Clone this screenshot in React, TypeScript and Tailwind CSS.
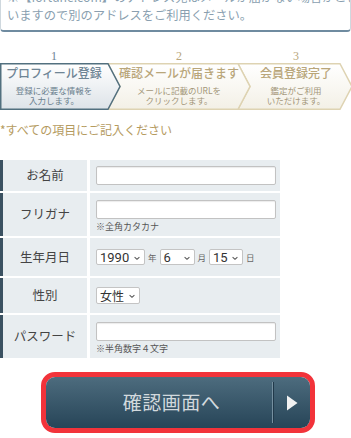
import React from 'react';

const jp = { fontFamily: '"Noto Sans CJK JP", "Noto Sans", sans-serif' };

const Chevron: React.FC<{ className?: string }> = ({ className }) => (
  <svg viewBox="0 0 10 10" className={className} fill="none" stroke="currentColor" strokeWidth="1.3">
    <path d="M2 3.8 L5 6.6 L8 3.8" />
  </svg>
);

const FakeSelect: React.FC<{ value: string; width: string }> = ({ value, width }) => (
  <span
    className={`relative flex h-[16px] items-center rounded-[2px] border border-[#c4c4c4] bg-white pl-[3px] text-[13px] leading-none text-[#333] ${width}`}
    style={{ fontFamily: 'Roboto, "Noto Sans CJK JP", sans-serif' }}
  >
    {value}
    <Chevron className="absolute right-[3px] top-[4px] h-[8px] w-[8px] text-[#555]" />
  </span>
);

const Row: React.FC<{ label: string; h: string; children: React.ReactNode; top?: boolean }> = ({
  label,
  h,
  children,
  top,
}) => (
  <div className={`flex gap-[3px] ${h}`}>
    <div className="flex w-[87px] items-center justify-center border-l-[3px] border-[#3b5161] bg-[#e8edf0] text-[12.5px] text-[#444]">
      {label}
    </div>
    <div className={`flex flex-1 bg-[#e8edf0] pl-[6px] ${top ? 'flex-col pt-[7px]' : 'items-center'}`}>
      {children}
    </div>
  </div>
);

const TextBox = () => (
  <div className="h-[19px] w-[180px] rounded-[2px] border border-[#c2c2c2] bg-white shadow-[inset_0_1px_1px_rgba(0,0,0,0.08)]" />
);

export default function App() {
  const steps = [
    { n: '1', title: 'プロフィール登録', sub: ['登録に必要な情報を', '入力します。'], active: true, cls: 'w-[108px]' },
    { n: '2', title: '確認メールが届きます', sub: ['メールに記載のURLを', 'クリックします。'], active: false, cls: 'ml-[12px] w-[118px]' },
    { n: '3', title: '会員登録完了', sub: ['鑑定がご利用', 'いただけます。'], active: false, cls: 'ml-[12px] w-[92px]' },
  ];

  return (
    <div className="h-[438px] w-[351px] overflow-hidden bg-white" style={jp}>
      {/* notice box, scrolled partly off the top */}
      <div className="-mt-[12px] overflow-hidden whitespace-nowrap rounded-b-[4px] border-x border-b-2 border-[#cfd8de] border-b-[#6f8ba0] px-[6px] pb-[6px] text-[12.25px] leading-[18px] text-[#8a9fb0]">
        <div>※【fortune.com】のアドレス宛はメールが届かない場合がござ</div>
        <div>いますので別のアドレスをご利用ください。</div>
      </div>

      {/* steps */}
      <div className="mt-[17px] flex h-[14px] items-end">
        {steps.map(s => (
          <div
            key={s.n}
            className={`${s.cls} text-center text-[12px] leading-[13px] ${s.active ? 'text-[#6b8293]' : 'text-[#b9a77c]'}`}
            style={{ fontFamily: '"Liberation Serif", serif' }}
          >
            {s.n}
          </div>
        ))}
      </div>
      <div className="relative h-[47px] w-[351px]">
        <svg className="absolute inset-0" width="351" height="47" viewBox="0 0 351 47">
          <defs>
            <linearGradient id="gBlue" x1="0" y1="0" x2="0" y2="1">
              <stop offset="0" stopColor="#ffffff" />
              <stop offset="1" stopColor="#dde3e8" />
            </linearGradient>
            <linearGradient id="gBeige" x1="0" y1="0" x2="0" y2="1">
              <stop offset="0" stopColor="#ffffff" />
              <stop offset="1" stopColor="#f3f0e6" />
            </linearGradient>
          </defs>
          <path d="M238 0.75 L340 0.75 L352 23.5 L340 46.25 L238 46.25 L250 23.5 Z" fill="url(#gBeige)" stroke="#ded3b2" strokeWidth="1.5" />
          <path d="M108 0.75 L238 0.75 L250 23.5 L238 46.25 L108 46.25 L120 23.5 Z" fill="url(#gBeige)" stroke="#ded3b2" strokeWidth="1.5" />
          <path d="M0.75 0.75 L108 0.75 L120 23.5 L108 46.25 L0.75 46.25 Z" fill="url(#gBlue)" stroke="#52707f" strokeWidth="1.5" />
        </svg>
        <div className="relative flex h-full">
          {steps.map(s => (
            <div key={s.n} className={`${s.cls} flex flex-col items-center pt-[2px]`}>
              <div
                className={`whitespace-nowrap text-[12px] font-medium leading-[16px] ${s.active ? 'text-[#6f8595]' : 'text-[#b9a67a]'}`}
              >
                {s.title}
              </div>
              <div
                className={`mt-[4px] whitespace-nowrap text-center text-[8.5px] leading-[10px] ${s.active ? 'text-[#6b7f8e]' : 'text-[#a39679]'}`}
              >
                <div>{s.sub[0]}</div>
                <div>{s.sub[1]}</div>
              </div>
            </div>
          ))}
        </div>
      </div>

      <div className="mt-[13px] text-[12px] leading-[14px] text-[#b59b5f]">*すべての項目にご記入ください</div>

      {/* form table */}
      <div className="mt-[23px] flex w-[280px] flex-col gap-[2px]">
        <Row label="お名前" h="h-[31px]">
          <TextBox />
        </Row>
        <Row label="フリガナ" h="h-[43px]" top>
          <TextBox />
          <div className="mt-[3px] text-[9px] leading-[10px] text-[#555]">※全角カタカナ</div>
        </Row>
        <Row label="生年月日" h="h-[38px]">
          <FakeSelect value="1990" width="w-[49px]" />
          <span className="mx-[3px] text-[8.5px] text-[#666]">年</span>
          <FakeSelect value="6" width="w-[35px]" />
          <span className="mx-[3px] text-[8.5px] text-[#666]">月</span>
          <FakeSelect value="15" width="w-[34px]" />
          <span className="mx-[3px] text-[8.5px] text-[#666]">日</span>
        </Row>
        <Row label="性別" h="h-[35px]">
          <span className="relative flex h-[17px] w-[44px] items-center rounded-[2px] border border-[#c4c4c4] bg-white pl-[3px] text-[12px] leading-none text-[#333]">
            女性
            <Chevron className="absolute right-[3px] top-[4px] h-[8px] w-[8px] text-[#555]" />
          </span>
        </Row>
        <Row label="パスワード" h="h-[43px]" top>
          <TextBox />
          <div className="mt-[3px] text-[9px] leading-[10px] text-[#555]">※半角数字４文字</div>
        </Row>
      </div>

      {/* submit button */}
      <div className="ml-[41px] mt-[14px] w-[274px] rounded-[14px] border-[5px] border-[#f2333a]">
        <button className="flex h-[51px] w-full items-stretch rounded-[9px] bg-gradient-to-b from-[#4d6c7e] to-[#274558]">
          <span className="flex flex-1 items-center justify-center pl-[25px] text-[19px] tracking-[0.5px] text-[#d2d9dd]">
            確認画面へ
          </span>
          <span className="my-[5px] w-px bg-[#7590a0] shadow-[1px_0_0_#21394a]" />
          <span className="flex w-[37px] items-center justify-center">
            <svg width="12" height="16" viewBox="0 0 12 16">
              <path d="M1 0.5 L11.5 8 L1 15.5 Z" fill="#f2f2f2" />
            </svg>
          </span>
        </button>
      </div>
    </div>
  );
}
